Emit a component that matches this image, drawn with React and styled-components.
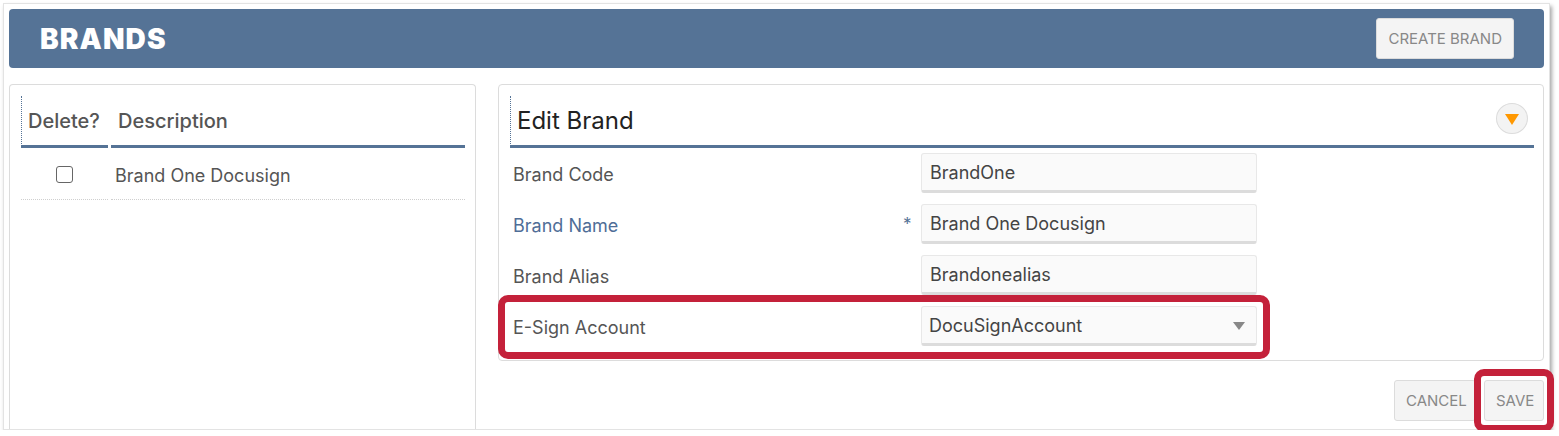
import React from "react";
import styled, { createGlobalStyle, css } from "styled-components";

const blue = "#557396";
const red = "#c4213a";

const GlobalStyle = createGlobalStyle`
    body {
        margin: 0;
        background: #fff;
        font-family: Inter, "Liberation Sans", sans-serif;
    }
`;

const highlight = css`
    &::after {
        content: "";
        position: absolute;
        box-sizing: border-box;
        border: 7px solid ${red};
        border-radius: 10px;
        pointer-events: none;
        z-index: 3;
    }
`;

export default function App() {
    const fields = [
        { label: "Brand Code", value: "BrandOne" },
        { label: "Brand Name", value: "Brand One Docusign", required: true },
        { label: "Brand Alias", value: "Brandonealias" },
        { label: "E-Sign Account", value: "DocuSignAccount", select: true, marked: true },
    ];

    return (
        <>
            <GlobalStyle />
            <Frame>
                <PageHeader>
                    <Title>BRANDS</Title>
                    <Button>CREATE BRAND</Button>
                </PageHeader>
                <Body>
                    <ListPanel>
                        <Table>
                            <HeadCell $dotted>Delete?</HeadCell>
                            <HeadCell>Description</HeadCell>
                            <Cell $center>
                                <Checkbox />
                            </Cell>
                            <Cell>Brand One Docusign</Cell>
                        </Table>
                    </ListPanel>
                    <EditColumn>
                        <Card>
                            <CardHeader>
                                <CardTitle>Edit Brand</CardTitle>
                                <Toggle>
                                    <svg width="14" height="11" viewBox="0 0 14 11">
                                        <path d="M0 0 H14 L7 11 Z" fill="#ff9800" />
                                    </svg>
                                </Toggle>
                            </CardHeader>
                            <Form>
                                {fields.map((f) => (
                                    <FieldRow key={f.label} $marked={f.marked}>
                                        <Label $required={f.required}>{f.label}</Label>
                                        <Star>{f.required ? "*" : ""}</Star>
                                        <Input $select={f.select}>
                                            {f.value}
                                            {f.select && (
                                                <svg width="12" height="8" viewBox="0 0 12 8">
                                                    <path d="M0 0 H12 L6 8 Z" fill="#888" />
                                                </svg>
                                            )}
                                        </Input>
                                    </FieldRow>
                                ))}
                            </Form>
                        </Card>
                        <Actions>
                            <Button $w={82}>CANCEL</Button>
                            <Button $w={60} $marked>SAVE</Button>
                        </Actions>
                    </EditColumn>
                </Body>
            </Frame>
        </>
    );
}

const Frame = styled.div`
    position: relative;
    box-sizing: border-box;
    margin: 3px 0 0 3px;
    width: 1547px;
    height: 427px;
    border: 1px solid #e3e3e3;
    box-shadow: 2px 3px 4px rgba(0, 0, 0, 0.35);
    padding: 5px 5px 0 5px;
    background: #fff;
    display: flex;
    flex-direction: column;
`;

const PageHeader = styled.div`
    height: 59px;
    flex: none;
    background: ${blue};
    border-radius: 4px;
    display: flex;
    align-items: center;
    justify-content: space-between;
    padding: 0 30px 0 31px;
`;

const Title = styled.h1`
    margin: 0;
    color: #fff;
    font-size: 28px;
    font-weight: 900;
    letter-spacing: 1.1px;
`;

const Button = styled.button`
    position: relative;
    height: 41px;
    ${(p) => p.$w && `width: ${p.$w}px;`}
    padding: 0 11px;
    background: #f4f4f4;
    border: 1px solid #dcdcdc;
    border-radius: 3px;
    color: #888;
    font-family: Inter, "Liberation Sans", sans-serif;
    font-size: 15px;
    ${(p) =>
        p.$marked &&
        css`
            ${highlight}
            &::after {
                left: -11px;
                top: -12px;
                right: -11px;
                bottom: -12px;
            }
        `}
`;

const Body = styled.div`
    flex: 1;
    display: flex;
    gap: 22px;
    margin-top: 16px;
    min-height: 0;
`;

const ListPanel = styled.div`
    width: 467px;
    box-sizing: border-box;
    border: 1px solid #dcdcdc;
    border-bottom: none;
    border-radius: 4px 4px 0 0;
    padding: 11px 10px 0 11px;
`;

const Table = styled.div`
    display: grid;
    grid-template-columns: 87px 1fr;
    column-gap: 3px;
`;

const HeadCell = styled.div`
    height: 49px;
    display: flex;
    align-items: center;
    padding-left: ${(p) => (p.$dotted ? 6 : 7)}px;
    border-bottom: 3px solid ${blue};
    border-left: ${(p) => (p.$dotted ? `1px dotted ${blue}` : "none")};
    color: #555;
    font-size: 20px;
    font-weight: 500;
`;

const Cell = styled.div`
    height: 52px;
    display: flex;
    align-items: center;
    justify-content: ${(p) => (p.$center ? "center" : "flex-start")};
    padding: ${(p) => (p.$center ? "1px 0 0" : "3px 0 0 4px")};
    box-sizing: border-box;
    border-bottom: 1px dotted #cfcfcf;
    color: #555;
    font-size: 18px;
`;

const Checkbox = styled.span`
    width: 17px;
    height: 17px;
    box-sizing: border-box;
    border: 1.5px solid #666;
    border-radius: 3px;
    background: #fff;
    margin-left: -1px;
`;

const EditColumn = styled.div`
    flex: 1;
    display: flex;
    flex-direction: column;
`;

const Card = styled.div`
    border: 1px solid #dcdcdc;
    border-radius: 4px;
    padding: 11px 9px 14px 11px;
`;

const CardHeader = styled.div`
    height: 49px;
    display: flex;
    align-items: center;
    justify-content: space-between;
    padding: 0 6px;
    border-left: 1px dotted ${blue};
    border-bottom: 3px solid ${blue};
`;

const CardTitle = styled.h2`
    margin: 0;
    font-size: 24px;
    font-weight: 400;
    color: #222;
`;

const Toggle = styled.span`
    width: 32px;
    height: 31px;
    box-sizing: border-box;
    border-radius: 50%;
    background: #f3f3f3;
    border: 1px solid #dcdcdc;
    display: flex;
    align-items: center;
    justify-content: center;
    padding-top: 1px;
    margin: -4px 0 0;
`;

const Form = styled.div`
    display: flex;
    flex-direction: column;
    gap: 11px;
    margin-top: 5px;
`;

const FieldRow = styled.div`
    position: relative;
    display: grid;
    grid-template-columns: 390px 21px 336px;
    align-items: center;
    height: 40px;
    ${(p) =>
        p.$marked &&
        css`
            ${highlight}
            &::after {
                left: -12px;
                top: -11px;
                width: 772px;
                height: 64px;
            }
        `}
`;

const Label = styled.span`
    padding: 2px 0 0 3px;
    font-size: 18px;
    color: ${(p) => (p.$required ? "#4f6d97" : "#555")};
`;

const Star = styled.span`
    color: ${blue};
    font-size: 17px;
    padding-left: 3px;
`;

const Input = styled.div`
    height: 40px;
    box-sizing: border-box;
    display: flex;
    align-items: center;
    justify-content: space-between;
    padding: 1px 11px 0 8px;
    background: #fafafa;
    border: 1px solid #e8e8e8;
    border-bottom: 3px solid #dcdcdc;
    border-radius: 3px;
    color: #444;
    font-size: 18px;
    ${(p) => p.$select && "padding-left: 7px;"}
`;

const Actions = styled.div`
    display: flex;
    justify-content: flex-end;
    gap: 8px;
    margin-top: 19px;
`;
